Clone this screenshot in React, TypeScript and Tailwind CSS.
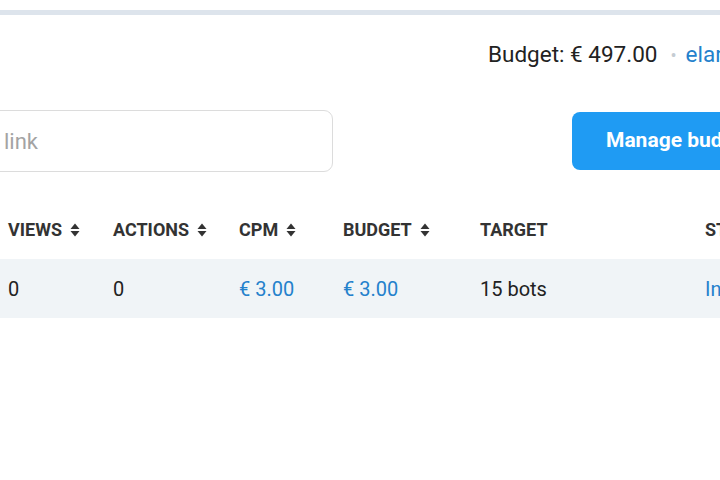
import { useState } from 'react'

type Row = {
  views: number
  actions: number
  cpm: string
  budget: string
  target: string
  status: string
}

const rows: Row[] = [
  { views: 0, actions: 0, cpm: '€ 3.00', budget: '€ 3.00', target: '15 bots', status: 'In Review' },
]

function SortIcon() {
  return (
    <svg width="10" height="14" viewBox="0 0 10 14" className="ml-[8px] inline-block shrink-0">
      <path d="M5 0.5 L9.5 6 H0.5 Z" fill="#333" />
      <path d="M5 13.5 L9.5 8 H0.5 Z" fill="#333" />
    </svg>
  )
}

function HeadCell({ label, sortable, width }: { label: string; sortable?: boolean; width: string }) {
  return (
    <th className={`${width} p-0 text-left align-middle`}>
      <span className="flex items-center whitespace-nowrap text-[18px] font-bold uppercase text-[#333]">
        {label}
        {sortable && <SortIcon />}
      </span>
    </th>
  )
}

export default function App() {
  const [query, setQuery] = useState('')

  return (
    <div className="h-[480px] w-[720px] overflow-hidden bg-white font-['Roboto',sans-serif] text-[#222]">
      <div className="pt-[10px]">
        <div className="h-[5px] w-full bg-[#dde4ec]" />
      </div>

      {/* account line */}
      <div className="flex h-[80px] items-center whitespace-nowrap pl-[488px] text-[22.5px]">
        <span className="text-[#222]">Budget: € 497.00</span>
        <span className="ml-[13px] mr-[9px] text-[18px] text-[#c5ccd3]">•</span>
        <span className="text-[#2481cc]">elaria_ads</span>
      </div>

      {/* search + button */}
      <div className="mt-[15px] flex items-center whitespace-nowrap">
        <input
          value={query}
          onChange={(e) => setQuery(e.target.value)}
          placeholder="link"
          className="-ml-[20px] h-[62px] w-[353px] shrink-0 rounded-[9px] border border-[#dcdcdc] pl-[23px] text-[22px] text-[#222] outline-none placeholder:text-[#a3a3a3]"
        />
        <button
          type="button"
          className="ml-[239px] h-[58px] shrink-0 rounded-[8px] bg-[#1f9bf3] px-[34px] text-[21px] font-bold text-white"
        >
          Manage budget
        </button>
      </div>

      {/* table */}
      <table className="mt-[28px] w-[825px] table-fixed border-collapse whitespace-nowrap">
        <thead>
          <tr className="h-[59px]">
            <HeadCell label="Views" sortable width="w-[113px] pl-[8px]" />
            <HeadCell label="Actions" sortable width="w-[126px]" />
            <HeadCell label="CPM" sortable width="w-[104px]" />
            <HeadCell label="Budget" sortable width="w-[137px]" />
            <HeadCell label="Target" width="w-[225px]" />
            <HeadCell label="Status" width="w-[120px]" />
          </tr>
        </thead>
        <tbody>
          {rows.map((r, i) => (
            <tr key={i} className="h-[59px] bg-[#f0f4f7] text-[20px]">
              <td className="pl-[8px] text-[#222]">{r.views}</td>
              <td className="text-[#222]">{r.actions}</td>
              <td className="text-[#2481cc]">{r.cpm}</td>
              <td className="text-[#2481cc]">{r.budget}</td>
              <td className="text-[#222]">{r.target}</td>
              <td className="text-[#2481cc]">{r.status}</td>
            </tr>
          ))}
        </tbody>
      </table>
    </div>
  )
}
